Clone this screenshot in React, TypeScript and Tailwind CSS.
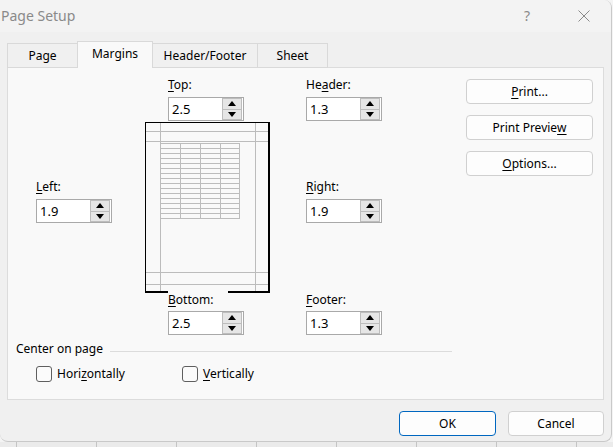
import React from 'react';

const U: React.FC<{ children: React.ReactNode }> = ({ children }) => (
  <span className="underline underline-offset-[2px]">{children}</span>
);

const Label: React.FC<{ children: React.ReactNode }> = ({ children }) => (
  <div className="h-[14px] whitespace-nowrap text-[12px] leading-[14px] text-black">{children}</div>
);

const Arrow: React.FC<{ up?: boolean }> = ({ up }) => (
  <svg width="8" height="5" viewBox="0 0 8 5" className="block">
    {up ? <polygon points="4,0 8,5 0,5" fill="#000" /> : <polygon points="0,0 8,0 4,5" fill="#000" />}
  </svg>
);

const Spin: React.FC<{ value: string; className?: string }> = ({ value, className = '' }) => (
  <div className={`flex h-[24px] w-[76px] border border-[#a9a9a9] bg-white ${className}`}>
    <span className="flex-1 pl-[3px] text-[13px] leading-[22px] text-black">{value}</span>
    <div className="mr-[1px] flex h-[22px] w-[20px] flex-col border border-[#bdbdbd] bg-[#e6e6e6]">
      <div className="flex flex-1 items-center justify-center">
        <Arrow up />
      </div>
      <div className="flex flex-1 items-center justify-center border-t border-[#bdbdbd]">
        <Arrow />
      </div>
    </div>
  </div>
);

const PagePreview: React.FC = () => {
  const rows = Array.from({ length: 16 }, (_, i) => 22.5 + i * 5);
  const cols = [15.5, 35.5, 55.5, 75.5, 94.5];
  return (
    <svg width="126" height="172" viewBox="0 0 126 172" className="block" shapeRendering="crispEdges">
      <g stroke="#bcbcbc" strokeWidth="1">
        <line x1="1" y1="10.5" x2="123" y2="10.5" />
        <line x1="1" y1="20.5" x2="123" y2="20.5" />
        <line x1="1" y1="151.5" x2="123" y2="151.5" />
        <line x1="1" y1="163.5" x2="123" y2="163.5" />
        <line x1="15.5" y1="2" x2="15.5" y2="170" />
        <line x1="110.5" y1="2" x2="110.5" y2="170" />
        {rows.map(y => (
          <line key={y} x1="15.5" y1={y} x2="94.5" y2={y} />
        ))}
        {cols.map(x => (
          <line key={x} x1={x} y1="22.5" x2={x} y2="97.5" />
        ))}
      </g>
      <g fill="#000">
        <rect x="0" y="1" width="124" height="1" />
        <rect x="0" y="1" width="1" height="171" />
        <rect x="123" y="1" width="2" height="171" />
        <rect x="0" y="170" width="23" height="2" />
        <rect x="83" y="170" width="42" height="2" />
      </g>
    </svg>
  );
};

const SideButton: React.FC<{ children: React.ReactNode }> = ({ children }) => (
  <button className="flex h-[25px] w-[127px] items-center justify-center rounded-[4px] border border-[#d0d0d0] bg-[#fdfdfd] text-[12px] leading-[14px] text-black">
    {children}
  </button>
);

const Checkbox: React.FC<{ children: React.ReactNode; className?: string }> = ({ children, className = '' }) => (
  <div className={`flex items-center gap-[5px] ${className}`}>
    <div className="h-[16px] w-[16px] rounded-[3px] border border-[#5f5f5f] bg-[#fbfbfb]" />
    <Label>{children}</Label>
  </div>
);

const tabs = ['Page', 'Margins', 'Header/Footer', 'Sheet'];
const tabWidths = ['w-[71px]', 'w-[76px]', 'w-[106px]', 'w-[71px]'];

export default function App() {
  return (
    <div className="flex h-[447px] w-[613px] flex-col overflow-hidden bg-[#f4f4f4] font-['Noto_Sans',sans-serif]">
      <div className="flex h-[442px] w-[612px] flex-col overflow-hidden rounded-tr-[8px] rounded-b-[8px] border-r border-b border-[#c9c9c9] bg-[#f0f0f0]">
        {/* title bar */}
        <div className="flex h-[32px] items-center bg-[#f3f3f3] text-[#8a8a8a]">
          <span className="pl-[1px] text-[14px] leading-[18px]">Page Setup</span>
          <span className="ml-auto text-[14px] leading-[18px]">?</span>
          <svg width="12" height="12" viewBox="0 0 12 12" className="ml-[48px] mr-[21px]">
            <path d="M0.5 0.5 L11.5 11.5 M11.5 0.5 L0.5 11.5" stroke="#8a8a8a" strokeWidth="1" fill="none" />
          </svg>
        </div>

        {/* tabs */}
        <div className="relative z-10 -mb-px flex h-[36px] items-end pl-[7px]">
          {tabs.map((t, i) => {
            const active = t === 'Margins';
            return (
              <div
                key={t}
                className={`flex items-center justify-center border-x border-t border-[#d9d9d9] text-[12px] leading-[14px] text-black ${tabWidths[i]} ${
                  i > 0 ? '-ml-px' : ''
                } ${active ? 'relative z-20 h-[27px] bg-[#f9f9f9] pb-[2px]' : 'h-[25px] border-b bg-[#f0f0f0]'}`}
              >
                {t}
              </div>
            );
          })}
        </div>

        {/* panel */}
        <div className="ml-[7px] flex h-[333px] w-[597px] flex-col border border-[#dcdcdc] bg-[#f9f9f9]">
          <div className="flex">
            <div className="ml-[28px] pt-[112px]">
              <Label>
                <U>L</U>eft:
              </Label>
              <Spin className="mt-[5px]" value="1.9" />
            </div>

            <div className="ml-[33px] flex w-[126px] flex-col">
              <div className="pl-[23px] pt-[10px]">
                <Label>
                  <U>T</U>op:
                </Label>
                <Spin className="mt-[5px]" value="2.5" />
              </div>
              <PagePreview />
              <div className="pl-[23px]">
                <Label>
                  <U>B</U>ottom:
                </Label>
                <Spin className="mt-[4px]" value="2.5" />
              </div>
            </div>

            <div className="ml-[35px] pt-[10px]">
              <Label>
                He<U>a</U>der:
              </Label>
              <Spin className="mt-[5px]" value="1.3" />
              <div className="mt-[59px]">
                <Label>
                  <U>R</U>ight:
                </Label>
              </div>
              <Spin className="mt-[5px]" value="1.9" />
              <div className="mt-[70px]">
                <Label>
                  <U>F</U>ooter:
                </Label>
              </div>
              <Spin className="mt-[4px]" value="1.3" />
            </div>

            <div className="ml-[84px] flex flex-col gap-[11px] pt-[11px]">
              <SideButton>
                <U>P</U>rint...
              </SideButton>
              <SideButton>
                Print Previe<U>w</U>
              </SideButton>
              <SideButton>
                <U>O</U>ptions...
              </SideButton>
            </div>
          </div>

          <div className="ml-[8px] mt-[7px] w-[436px]">
            <div className="flex items-start">
              <Label>Center on page</Label>
              <div className="ml-[7px] mt-[9px] h-px flex-1 bg-[#dcdcdc]" />
            </div>
            <div className="ml-[20px] mt-[10px] flex">
              <Checkbox className="w-[146px]">
                Hori<U>z</U>ontally
              </Checkbox>
              <Checkbox>
                <U>V</U>ertically
              </Checkbox>
            </div>
          </div>
        </div>

        {/* footer */}
        <div className="mt-[11px] flex justify-end gap-[12px] pr-[7px]">
          <button className="h-[25px] w-[97px] rounded-[4px] border border-[#0067c0] bg-[#fdfdfd] text-[12px] leading-[14px] text-black">
            OK
          </button>
          <button className="h-[25px] w-[96px] rounded-[4px] border border-[#d0d0d0] bg-[#fdfdfd] text-[12px] leading-[14px] text-black">
            Cancel
          </button>
        </div>
      </div>

      {/* sheet grid behind the dialog */}
      <div className="flex h-[5px] bg-[#ebebeb]">
        <div className="w-[16px] shrink-0" />
        {Array.from({ length: 7 }, (_, i) => (
          <div key={i} className="w-[80px] shrink-0 border-l border-[#c4c4c4]" />
        ))}
        <div className="flex-1 border-l border-[#c4c4c4]" />
      </div>
    </div>
  );
}
